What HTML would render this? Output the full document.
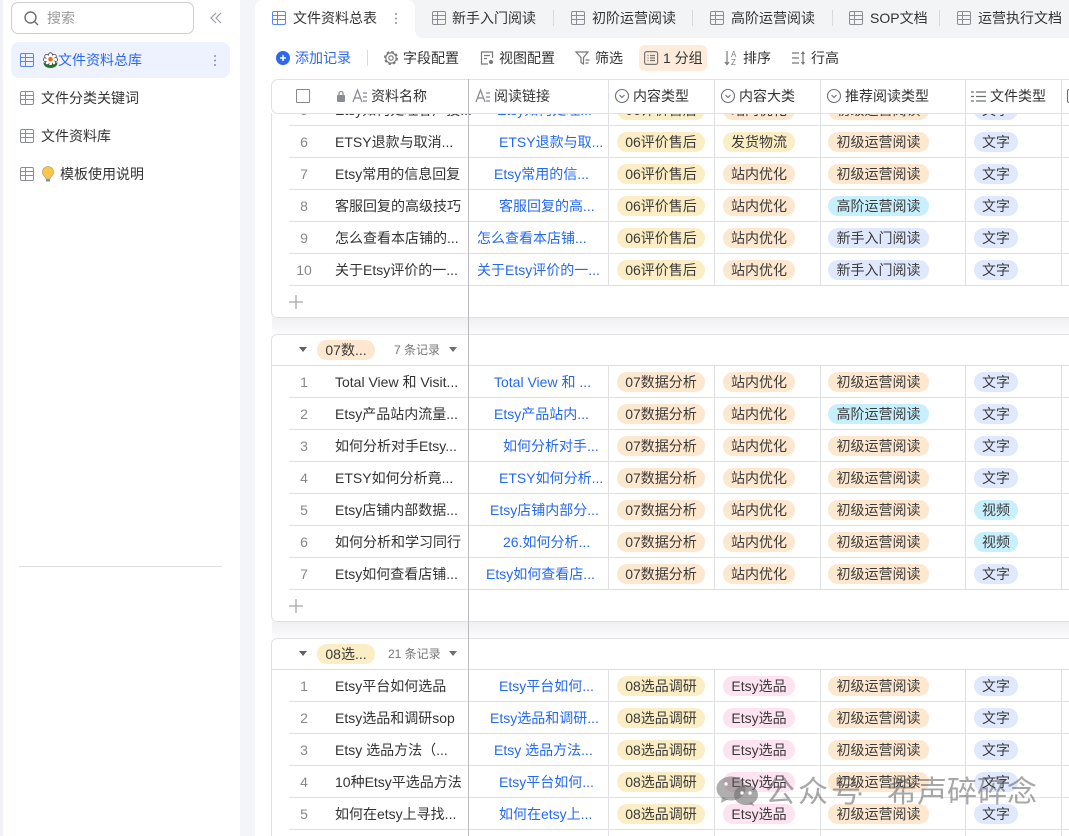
<!DOCTYPE html>
<html lang="zh"><head><meta charset="utf-8"><title>文件资料总表</title>
<style>
*{box-sizing:border-box}
html,body{margin:0;padding:0;width:1069px;height:836px;overflow:hidden;background:#fff}
body{position:relative;font:14px/20px "Liberation Sans","Noto Sans CJK SC",sans-serif;color:#333}
.a{position:absolute;white-space:nowrap}
svg{position:absolute;display:block;overflow:visible}
.r{position:absolute;left:0;width:1069px;height:32px;overflow:hidden;background:
linear-gradient(#dfe0e4,#dfe0e4) 289px 31px/780px 1px no-repeat,
linear-gradient(#dfe0e4,#dfe0e4) 608px 0/1px 100% no-repeat,
linear-gradient(#dfe0e4,#dfe0e4) 714px 0/1px 100% no-repeat,
linear-gradient(#dfe0e4,#dfe0e4) 820px 0/1px 100% no-repeat,
linear-gradient(#dfe0e4,#dfe0e4) 965px 0/1px 100% no-repeat,
linear-gradient(#dfe0e4,#dfe0e4) 1061px 0/1px 100% no-repeat}
.r>*{position:absolute;top:6px;white-space:nowrap;font-style:normal;font-weight:400;text-decoration:none}
.n{left:294px;width:20px;text-align:center;color:#888}
.t{left:335px;color:#333}
.l{color:#2468f2}
.g{height:20px;line-height:20px;border-radius:10px;text-align:center;color:#3a3a3a}
.c1{left:617px;width:88px}.c2{left:723px;width:72px}.c3{left:828px;width:101px}.c4{left:974px;width:44px}
.y{background:#fbeec4}.o{background:#fde7cf}.p{background:#fde2ef}.b{background:#c7effc}.v{background:#e0e8fd}
.card{position:absolute;left:271px;width:798px;border:1px solid #e0e1e5;border-right:0;border-radius:6px 0 0 6px;background:#fff}
.sh{position:absolute;left:272px;width:797px;height:16px;background:linear-gradient(#f0f0f2,#fbfbfc)}
.tb{color:#333}
.sp{position:absolute;width:1px;background:#d8dade}
.gh{color:#777;font-size:12px}
.ic{position:absolute;width:14px;height:14px;border:1.5px solid #8a8d93;border-radius:2px;background:
linear-gradient(#8a8d93,#8a8d93) 3.500px 0/1.300px 100% no-repeat,
linear-gradient(#8a8d93,#8a8d93) 0 2.800px/100% 1.300px no-repeat,
linear-gradient(#8a8d93,#8a8d93) 0 6.600px/100% 1.300px no-repeat}
.ic.bl{border-color:#5b86f0;background:
linear-gradient(#5b86f0,#5b86f0) 3.500px 0/1.300px 100% no-repeat,
linear-gradient(#5b86f0,#5b86f0) 0 2.800px/100% 1.300px no-repeat,
linear-gradient(#5b86f0,#5b86f0) 0 6.600px/100% 1.300px no-repeat}
</style></head>
<body>
<!-- sidebar -->
<div class="a" style="left:0;top:0;width:3px;height:836px;background:#f1f2f5"></div>
<div class="a" style="left:240px;top:0;width:15px;height:836px;background:#f4f5f8"></div>
<div class="a" style="left:11px;top:2px;width:183px;height:32px;border:1px solid #cfcfcf;border-radius:7px"></div>
<svg style="left:24px;top:11px" width="15" height="15" fill="none" stroke="#6b6f76" stroke-width="1.4"><circle cx="6.5" cy="6.5" r="5.5"/><path d="M10.5 10.5l3.5 3.5"/></svg>
<div class="a" style="left:47px;top:8px;color:#9a9a9a">搜索</div>
<svg style="left:210px;top:12px" width="12" height="12" fill="none" stroke="#9a9da3" stroke-width="1.2"><path d="M6 1L1 6l5 5M11 1L6 6l5 5"/></svg>
<div class="a" style="left:11px;top:42px;width:219px;height:36px;background:#edf2fe;border-radius:8px"></div>
<div class="ic bl" style="left:20px;top:53px"></div>
<svg style="left:43px;top:52px" width="15" height="17"><path d="M0.500 10.500c2.500 0 5.500 1 7 3 1.500-2 4.500-3 7-3 0 3.500-3 5.500-7 5.500s-7-2-7-5.500z" fill="#1c7a20"/><g fill="#fff" stroke="#444" stroke-width=".8"><circle cx="7.500" cy="2.800" r="2"/><circle cx="11.300" cy="4.400" r="2"/><circle cx="12.500" cy="7.600" r="2"/><circle cx="10.700" cy="10.700" r="2"/><circle cx="7.500" cy="11.500" r="2"/><circle cx="4.300" cy="10.700" r="2"/><circle cx="2.500" cy="7.600" r="2"/><circle cx="3.700" cy="4.400" r="2"/></g><circle cx="7.500" cy="7.200" r="4.200" fill="#fff"/><circle cx="7.500" cy="7.200" r="2.300" fill="#f4691e"/></svg>
<div class="a" style="left:58px;top:50px;color:#2e68ee">文件资料总库</div>
<svg style="left:213px;top:54px" width="4" height="13" fill="#8d9096"><circle cx="2" cy="2" r="1"/><circle cx="2" cy="6.5" r="1"/><circle cx="2" cy="11" r="1"/></svg>
<div class="ic" style="left:20px;top:91px"></div>
<div class="a" style="left:41px;top:88px">文件分类关键词</div>
<div class="ic" style="left:20px;top:129px"></div>
<div class="a" style="left:41px;top:126px">文件资料库</div>
<div class="ic" style="left:20px;top:167px"></div>
<svg style="left:42px;top:166px" width="12" height="16"><path d="M6 .5a5.5 5.5 0 0 1 3.4 9.8c-.7.6-1 1.2-1 1.9H3.6c0-.7-.3-1.3-1-1.9A5.5 5.5 0 0 1 6 .5z" fill="#fbc64a" stroke="#a88a3a" stroke-width=".6"/><path d="M4 13h4v2.500H4z" fill="#8b8f96"/></svg>
<div class="a" style="left:60px;top:164px">模板使用说明</div>
<div class="a" style="left:19px;top:566px;width:203px;height:1px;background:#dedede"></div>

<!-- tabs -->
<div class="a" style="left:255px;top:0;width:814px;height:38px;background:#f3f4f6"></div>
<div class="a" style="left:255px;top:0;width:160px;height:38px;background:#fff;border-radius:8px 8px 0 0"></div>
<div class="a" style="left:415px;top:28px;width:10px;height:10px;background:#fff"></div>
<div class="a" style="left:415px;top:0;width:654px;height:38px;background:#f3f4f6;border-radius:0 0 0 8px"></div>
<div class="ic bl" style="left:272px;top:11px"></div>
<div class="a" style="left:293px;top:8px">文件资料总表</div>
<svg style="left:394px;top:12px" width="4" height="13" fill="#8d9096"><circle cx="2" cy="2" r="1"/><circle cx="2" cy="6.5" r="1"/><circle cx="2" cy="11" r="1"/></svg>
<div class="ic" style="left:432px;top:11px"></div><div class="a" style="left:452px;top:8px">新手入门阅读</div><div class="sp" style="left:553px;top:10px;height:16px"></div>
<div class="ic" style="left:571px;top:11px"></div><div class="a" style="left:592px;top:8px">初阶运营阅读</div><div class="sp" style="left:692px;top:10px;height:16px"></div>
<div class="ic" style="left:710px;top:11px"></div><div class="a" style="left:731px;top:8px">高阶运营阅读</div><div class="sp" style="left:832px;top:10px;height:16px"></div>
<div class="ic" style="left:849px;top:11px"></div><div class="a" style="left:870px;top:8px">SOP文档</div><div class="sp" style="left:939px;top:10px;height:16px"></div>
<div class="ic" style="left:957px;top:11px"></div><div class="a" style="left:978px;top:8px">运营执行文档</div>

<!-- toolbar -->
<svg style="left:276px;top:51px" width="14" height="14"><circle cx="7" cy="7" r="7" fill="#2e68ee"/><path d="M7 4v6M4 7h6" stroke="#fff" stroke-width="1.5"/></svg>
<div class="a" style="left:295px;top:48px;color:#2e68ee">添加记录</div>
<div class="sp" style="left:367px;top:50px;height:16px"></div>
<svg style="left:384px;top:51px" width="14" height="14" fill="none" stroke="#777"><circle cx="7" cy="7" r="5.200" stroke-width="1.100"/><circle cx="7" cy="7" r="6.200" stroke-width="1.500" stroke-dasharray="2.600 2.270"/><circle cx="7" cy="7" r="2.200" stroke-width="1.100"/></svg>
<div class="a tb" style="left:403px;top:48px">字段配置</div>
<svg style="left:480px;top:51px" width="14" height="14" fill="none" stroke="#777" stroke-width="1.2"><path d="M8 13H1.500V1h11v6M4 4.500h6M4 7.500h3"/><circle cx="11" cy="11" r="2" fill="#777" stroke="none"/></svg>
<div class="a tb" style="left:499px;top:48px">视图配置</div>
<svg style="left:575px;top:51px" width="15" height="14" fill="none" stroke="#777" stroke-width="1.2"><path d="M1 1h12L8.500 6.500V13L6 11.500v-5zM10.500 9h4M10.500 12h3"/></svg>
<div class="a tb" style="left:595px;top:48px">筛选</div>
<div class="a" style="left:639px;top:45px;width:68px;height:26px;background:#fdebdc;border-radius:6px"></div>
<svg style="left:644px;top:51px" width="15" height="14" fill="none" stroke="#777" stroke-width="1.2"><rect x=".6" y=".6" width="13" height="12.800" rx="2"/><path d="M3.500 4.500h1M6 4.500h5M3.500 7h1M6 7h5M3.500 9.500h1M6 9.500h5"/></svg>
<div class="a tb" style="left:663px;top:48px">1 分组</div>
<svg style="left:724px;top:50px" width="15" height="16" fill="none" stroke="#777" stroke-width="1.2"><path d="M3 1v13M1 12l2 2.500L5 12"/><text x="7" y="7" font-size="8" fill="#777" stroke="none" font-family="Liberation Sans">A</text><text x="7" y="15" font-size="8" fill="#777" stroke="none" font-family="Liberation Sans">Z</text></svg>
<div class="a tb" style="left:743px;top:48px">排序</div>
<svg style="left:791px;top:51px" width="15" height="14" fill="none" stroke="#777" stroke-width="1.2"><path d="M1 2h7M1 7h7M1 12h7M12 1v12M10.500 3L12 1l1.500 2M10.500 11l1.500 2 1.500-2"/></svg>
<div class="a tb" style="left:811px;top:48px">行高</div>

<!-- table group 1 -->
<div class="card" style="top:90px;height:228px;border-top:0"></div>
<div class="r" style="top:94px"><i class="n">5</i><b class="t">Etsy如何处理客户投...</b><a class="l" style="left:497px">Etsy如何处理...</a><span class="g c1 y">06评价售后</span><span class="g c2 o">站内优化</span><span class="g c3 o">初级运营阅读</span><span class="g c4 v">文字</span></div>
<div class="r" style="top:126px"><i class="n">6</i><b class="t">ETSY退款与取消...</b><a class="l" style="left:499px">ETSY退款与取...</a><span class="g c1 y">06评价售后</span><span class="g c2 y">发货物流</span><span class="g c3 o">初级运营阅读</span><span class="g c4 v">文字</span></div>
<div class="r" style="top:158px"><i class="n">7</i><b class="t">Etsy常用的信息回复</b><a class="l" style="left:494px">Etsy常用的信...</a><span class="g c1 y">06评价售后</span><span class="g c2 o">站内优化</span><span class="g c3 o">初级运营阅读</span><span class="g c4 v">文字</span></div>
<div class="r" style="top:190px"><i class="n">8</i><b class="t">客服回复的高级技巧</b><a class="l" style="left:499px">客服回复的高...</a><span class="g c1 y">06评价售后</span><span class="g c2 o">站内优化</span><span class="g c3 b">高阶运营阅读</span><span class="g c4 v">文字</span></div>
<div class="r" style="top:222px"><i class="n">9</i><b class="t">怎么查看本店铺的...</b><a class="l" style="left:477px">怎么查看本店铺...</a><span class="g c1 y">06评价售后</span><span class="g c2 o">站内优化</span><span class="g c3 v">新手入门阅读</span><span class="g c4 v">文字</span></div>
<div class="r" style="top:254px"><i class="n">10</i><b class="t">关于Etsy评价的一...</b><a class="l" style="left:477px">关于Etsy评价的一...</a><span class="g c1 y">06评价售后</span><span class="g c2 o">站内优化</span><span class="g c3 v">新手入门阅读</span><span class="g c4 v">文字</span></div>
<svg style="left:289px;top:295px" width="14" height="14" stroke="#a3a6ab" stroke-width="1.3"><path d="M7 0v14M0 7h14"/></svg>
<div class="sh" style="top:318px"></div>

<!-- group 2 -->
<div class="card" style="top:334px;height:288px"></div>
<div class="a" style="left:272px;top:365px;width:797px;height:1px;background:#dfe0e4"></div>
<svg style="left:299px;top:347px" width="8" height="5" fill="#5f6368"><path d="M0 0h8L4 5z"/></svg>
<div class="a g o" style="left:317px;top:340px;width:58px">07数...</div>
<div class="a gh" style="left:394px;top:340px">7 条记录</div>
<svg style="left:449px;top:347px" width="8" height="5" fill="#6b6f76"><path d="M0 0h8L4 5z"/></svg>
<div class="r" style="top:366px"><i class="n">1</i><b class="t">Total View 和 Visit...</b><a class="l" style="left:494px">Total View 和 ...</a><span class="g c1 o">07数据分析</span><span class="g c2 o">站内优化</span><span class="g c3 o">初级运营阅读</span><span class="g c4 v">文字</span></div>
<div class="r" style="top:398px"><i class="n">2</i><b class="t">Etsy产品站内流量...</b><a class="l" style="left:494px">Etsy产品站内...</a><span class="g c1 o">07数据分析</span><span class="g c2 o">站内优化</span><span class="g c3 b">高阶运营阅读</span><span class="g c4 v">文字</span></div>
<div class="r" style="top:430px"><i class="n">3</i><b class="t">如何分析对手Etsy...</b><a class="l" style="left:503px">如何分析对手...</a><span class="g c1 o">07数据分析</span><span class="g c2 o">站内优化</span><span class="g c3 o">初级运营阅读</span><span class="g c4 v">文字</span></div>
<div class="r" style="top:462px"><i class="n">4</i><b class="t">ETSY如何分析竟...</b><a class="l" style="left:499px">ETSY如何分析...</a><span class="g c1 o">07数据分析</span><span class="g c2 o">站内优化</span><span class="g c3 o">初级运营阅读</span><span class="g c4 v">文字</span></div>
<div class="r" style="top:494px"><i class="n">5</i><b class="t">Etsy店铺内部数据...</b><a class="l" style="left:490px">Etsy店铺内部分...</a><span class="g c1 o">07数据分析</span><span class="g c2 o">站内优化</span><span class="g c3 o">初级运营阅读</span><span class="g c4 b">视频</span></div>
<div class="r" style="top:526px"><i class="n">6</i><b class="t">如何分析和学习同行</b><a class="l" style="left:503px">26.如何分析...</a><span class="g c1 o">07数据分析</span><span class="g c2 o">站内优化</span><span class="g c3 o">初级运营阅读</span><span class="g c4 b">视频</span></div>
<div class="r" style="top:558px"><i class="n">7</i><b class="t">Etsy如何查看店铺...</b><a class="l" style="left:486px">Etsy如何查看店...</a><span class="g c1 o">07数据分析</span><span class="g c2 o">站内优化</span><span class="g c3 o">初级运营阅读</span><span class="g c4 v">文字</span></div>
<svg style="left:289px;top:599px" width="14" height="14" stroke="#a3a6ab" stroke-width="1.3"><path d="M7 0v14M0 7h14"/></svg>
<div class="sh" style="top:622px"></div>

<!-- group 3 -->
<div class="card" style="top:638px;height:198px;border-bottom:0;border-radius:6px 0 0 0"></div>
<div class="a" style="left:272px;top:669px;width:797px;height:1px;background:#dfe0e4"></div>
<svg style="left:299px;top:651px" width="8" height="5" fill="#5f6368"><path d="M0 0h8L4 5z"/></svg>
<div class="a g y" style="left:317px;top:644px;width:58px">08选...</div>
<div class="a gh" style="left:388px;top:644px">21 条记录</div>
<svg style="left:449px;top:651px" width="8" height="5" fill="#6b6f76"><path d="M0 0h8L4 5z"/></svg>
<div class="r" style="top:670px"><i class="n">1</i><b class="t">Etsy平台如何选品</b><a class="l" style="left:499px">Etsy平台如何...</a><span class="g c1 y">08选品调研</span><span class="g c2 p">Etsy选品</span><span class="g c3 o">初级运营阅读</span><span class="g c4 v">文字</span></div>
<div class="r" style="top:702px"><i class="n">2</i><b class="t">Etsy选品和调研sop</b><a class="l" style="left:490px">Etsy选品和调研...</a><span class="g c1 y">08选品调研</span><span class="g c2 p">Etsy选品</span><span class="g c3 o">初级运营阅读</span><span class="g c4 v">文字</span></div>
<div class="r" style="top:734px"><i class="n">3</i><b class="t">Etsy 选品方法（...</b><a class="l" style="left:494px">Etsy 选品方法...</a><span class="g c1 y">08选品调研</span><span class="g c2 p">Etsy选品</span><span class="g c3 o">初级运营阅读</span><span class="g c4 v">文字</span></div>
<div class="r" style="top:766px"><i class="n">4</i><b class="t">10种Etsy平选品方法</b><a class="l" style="left:499px">Etsy平台如何...</a><span class="g c1 y">08选品调研</span><span class="g c2 p">Etsy选品</span><span class="g c3 o">初级运营阅读</span><span class="g c4 v">文字</span></div>
<div class="r" style="top:798px"><i class="n">5</i><b class="t">如何在etsy上寻找...</b><a class="l" style="left:499px">如何在etsy上...</a><span class="g c1 y">08选品调研</span><span class="g c2 p">Etsy选品</span><span class="g c3 o">初级运营阅读</span><span class="g c4 v">文字</span></div>
<div class="r" style="top:830px;height:6px;background:
linear-gradient(#dfe0e4,#dfe0e4) 608px 0/1px 100% no-repeat,linear-gradient(#dfe0e4,#dfe0e4) 714px 0/1px 100% no-repeat,linear-gradient(#dfe0e4,#dfe0e4) 820px 0/1px 100% no-repeat,linear-gradient(#dfe0e4,#dfe0e4) 965px 0/1px 100% no-repeat,linear-gradient(#dfe0e4,#dfe0e4) 1061px 0/1px 100% no-repeat"></div>

<!-- header -->
<div class="a" style="left:255px;top:72px;width:814px;height:41px;background:#fff"></div>
<div class="a" style="left:271px;top:79px;width:798px;height:35px;background:#fff;border:1px solid #e0e1e5;border-right:0;border-radius:7px 0 0 7px"></div>
<div class="a" style="left:296px;top:89px;width:14px;height:14px;border:1.5px solid #85888e;border-radius:1px"></div>
<svg style="left:336px;top:90px" width="10" height="12"><path d="M3 5.500V3.500a2 2 0 0 1 4 0v2" fill="none" stroke="#8a8d93" stroke-width="1.300"/><rect x="1" y="5" width="8" height="7" rx="1" fill="#8a8d93"/></svg>
<svg style="left:352px;top:89px" width="16" height="14" fill="none" stroke="#85888e" stroke-width="1.2"><path d="M1 13L5.500 1 10 13M2.800 9h5.400M11 4h4M11 8h4M11 12h4"/></svg>
<div class="a" style="left:371px;top:86px">资料名称</div>
<svg style="left:475px;top:89px" width="16" height="14" fill="none" stroke="#85888e" stroke-width="1.2"><path d="M1 13L5.500 1 10 13M2.800 9h5.400M11 4h4M11 8h4M11 12h4"/></svg>
<div class="a" style="left:494px;top:86px">阅读链接</div>
<div class="a" style="left:608px;top:80px;width:1px;height:33px;background:#dfe0e4"></div>
<svg style="left:615px;top:89px" width="14" height="14" fill="none" stroke="#6b6f76" stroke-width="1.1"><circle cx="7" cy="7" r="6.500"/><path d="M4.500 6L7 8.500 9.500 6"/></svg>
<div class="a" style="left:633px;top:86px">内容类型</div>
<div class="a" style="left:714px;top:80px;width:1px;height:33px;background:#dfe0e4"></div>
<svg style="left:721px;top:89px" width="14" height="14" fill="none" stroke="#6b6f76" stroke-width="1.1"><circle cx="7" cy="7" r="6.500"/><path d="M4.500 6L7 8.500 9.500 6"/></svg>
<div class="a" style="left:739px;top:86px">内容大类</div>
<div class="a" style="left:820px;top:80px;width:1px;height:33px;background:#dfe0e4"></div>
<svg style="left:827px;top:89px" width="14" height="14" fill="none" stroke="#6b6f76" stroke-width="1.1"><circle cx="7" cy="7" r="6.500"/><path d="M4.500 6L7 8.500 9.500 6"/></svg>
<div class="a" style="left:845px;top:86px">推荐阅读类型</div>
<div class="a" style="left:965px;top:80px;width:1px;height:33px;background:#dfe0e4"></div>
<svg style="left:971px;top:90px" width="15" height="13" fill="none" stroke="#6b6f76" stroke-width="1.200"><path d="M5 2h10M5 6.500h10M5 11h10M0 2h3M0 6.500h3M0 11h3"/></svg>
<div class="a" style="left:990px;top:86px">文件类型</div>
<div class="a" style="left:1061px;top:80px;width:1px;height:33px;background:#dfe0e4"></div>
<div class="a" style="left:1067px;top:89px;width:2px;height:14px;border:1px solid #6b6f76;border-right:0;border-radius:7px 0 0 7px"></div>
<!-- frozen line -->
<div class="a" style="left:468px;top:79px;width:1px;height:757px;background:#b9babf"></div>

<!-- watermark -->
<svg style="left:716px;top:776px" width="43" height="30"><ellipse cx="15" cy="12.500" rx="14.500" ry="12" fill="rgba(95,95,95,.5)"/><path d="M6 21l-1 6 7-3.500z" fill="rgba(95,95,95,.5)"/><ellipse cx="30" cy="19" rx="12" ry="10" fill="rgba(110,110,110,.6)"/><path d="M36 26l2.500 4-6.500-2z" fill="rgba(110,110,110,.6)"/><circle cx="26" cy="17" r="1.700" fill="#fff"/><circle cx="34" cy="17" r="1.700" fill="#fff"/><circle cx="10" cy="8" r="1.700" fill="#fff"/></svg>
<div class="a" style="left:765px;top:773px;font-size:30px;line-height:40px;letter-spacing:3px;color:rgba(80,80,80,.5)">公众号</div>
<div class="a" style="left:855px;top:773px;font-size:30px;line-height:40px;color:rgba(80,80,80,.5)">·</div>
<div class="a" style="left:887px;top:773px;font-size:30px;line-height:40px;color:rgba(80,80,80,.5)">希声碎碎念</div>
</body></html>
